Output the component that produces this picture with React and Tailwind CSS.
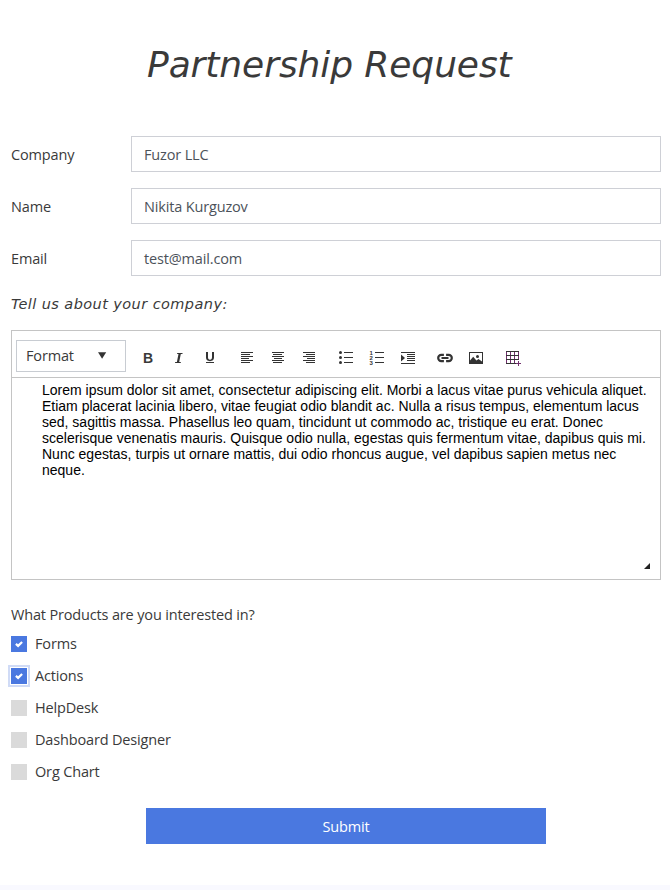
import React from "react";

const ui = "font-['Open_Sans','Noto_Sans',sans-serif] font-normal text-[14.5px] tracking-[-0.16px]";

const fields = [
  { label: "Company", value: "Fuzor LLC" },
  { label: "Name", value: "Nikita Kurguzov" },
  { label: "Email", value: "test@mail.com" },
];

const products = [
  { name: "Forms", checked: true },
  { name: "Actions", checked: true, focused: true },
  { name: "HelpDesk" },
  { name: "Dashboard Designer" },
  { name: "Org Chart" },
];

const lines = [
  "Lorem ipsum dolor sit amet, consectetur adipiscing elit. Morbi a lacus vitae purus vehicula aliquet.",
  "Etiam placerat lacinia libero, vitae feugiat odio blandit ac. Nulla a risus tempus, elementum lacus",
  "sed, sagittis massa. Phasellus leo quam, tincidunt ut commodo ac, tristique eu erat. Donec",
  "scelerisque venenatis mauris. Quisque odio nulla, egestas quis fermentum vitae, dapibus quis mi.",
  "Nunc egestas, turpis ut ornare mattis, dui odio rhoncus augue, vel dapibus sapien metus nec",
  "neque.",
];

function Icon({ width = 16, className = "", children }) {
  return (
    <svg width={width} height="16" viewBox={`0 0 ${width} 16`} fill="#333" shapeRendering="crispEdges" className={`block shrink-0 ${className}`}>
      {children}
    </svg>
  );
}

function Align({ kind, className }) {
  return (
    <Icon width={12} className={className}>
      {[12, 9, 12, 8, 12, 9].map((w, i) => (
        <rect key={i} x={kind === "left" ? 0 : kind === "right" ? 12 - w : Math.floor((12 - w) / 2)} y={2 + i * 2} width={w} height="1" />
      ))}
    </Icon>
  );
}

export default function App() {
  return (
    <div className="flex h-[890px] w-[670px] flex-col overflow-hidden bg-white text-[#3a3a3a]">
      <main className="h-[885px] pl-[11px] pr-[9px]">
        <h1 className="h-[136px] whitespace-nowrap pl-[136px] pt-[43px] font-['DejaVu_Sans',sans-serif] text-[36px] italic leading-[44px] tracking-[-0.08px] text-[#3a3a3a]">
          Partnership Request
        </h1>
        <div className="flex flex-col gap-4">
          {fields.map((f) => (
            <div key={f.label} className="flex h-9 items-center">
              <label className={`w-[120px] pt-[2px] leading-5 ${ui}`}>{f.label}</label>
              <div className={`flex h-9 flex-1 items-center border border-[#ced0d6] pl-3 pt-[2px] text-[#4c525a] ${ui}`}>
                {f.value}
              </div>
            </div>
          ))}
        </div>
        <p className="mt-[18px] h-5 whitespace-nowrap font-['DejaVu_Sans',sans-serif] text-[14.5px] italic leading-5 tracking-[0.42px]">
          Tell us about your company:
        </p>
        <section className="mt-4 flex h-[250px] flex-col border border-[#c4c4c4]">
          <div className="flex h-[47px] items-start border-b border-[#c4c4c4] pl-1 pt-[9px]">
            <button className={`flex h-8 w-[110px] items-center border border-[#c8ccd2] pb-px pl-[9px] ${ui}`}>
              <span className="w-[72px] text-left">Format</span>
              <svg width="9" height="7" viewBox="0 0 9 7" fill="#333"><path d="M0 .3h8.2L4.1 6.7z" /></svg>
            </button>
            <div className="flex h-8 items-start pt-[10px] font-['Liberation_Sans',Arial,sans-serif]">
              <span className="-mt-px ml-[17px] w-[10px] text-[14px] font-bold leading-[18px]">B</span>
              <Icon width={9} className="ml-[21px]"><path shapeRendering="auto" d="M3.3 3h5.2v1.1H6.8L5.2 12h1.6v1H1.1v-1h1.8l1.6-7.9H3z" /></Icon>
              <Icon width={10} className="ml-[22px]"><path shapeRendering="auto" d="M1 2h2v5.3c0 1.7.6 2.4 2 2.4s2-.7 2-2.4V2h2v5.6c0 2.3-1.4 3.6-4 3.6s-4-1.3-4-3.6zM1 12h8v1H1z" /></Icon>
              <Align kind="left" className="ml-[26px]" />
              <Align kind="center" className="ml-[19px]" />
              <Align kind="right" className="ml-[19px]" />
              <Icon width={15} className="ml-[24px]">
                {[3, 8, 13].map((y) => <g key={y}><circle cx="1.5" cy={y - 0.5} r="1.5" shapeRendering="auto" /><path d={`M5 ${y - 1}h9v1H5z`} /></g>)}
              </Icon>
              <Icon width={15} className="ml-[15px]">
                <path d="M6 2h9v1H6zM6 7h9v1H6zM6 12h9v1H6z" />
                {[1, 2, 3].map((n) => <text key={n} x="0.5" y={5 * n} fontSize="6" fontWeight="bold" fontFamily="Liberation Sans, sans-serif">{n}</text>)}
              </Icon>
              <Icon width={14} className="ml-[17px]">
                <path d="M0 2h14v1H0zM6 4h8v1H6zM6 6h8v1H6zM6 8h8v1H6zM6 10h8v1H6zM0 13h14v1H0z" />
                <path shapeRendering="auto" d="M0 4.5l4 3.5-4 3.5z" />
              </Icon>
              <Icon width={16} className="ml-[22px]">
                <g fill="none" stroke="#333" strokeWidth="2.2" shapeRendering="auto">
                  <path d="M6.9 4.9H4.3a3.1 3.1 0 0 0 0 6.2h2.6M9.1 4.9h2.6a3.1 3.1 0 0 1 0 6.2H9.1M4.5 8h7" />
                </g>
              </Icon>
              <Icon width={14} className="ml-[16px]">
                <path fillRule="evenodd" d="M0 2h14v12H0zM1 3v10h12V3z" />
                <path shapeRendering="auto" d="M1 10.5l3.2-3.7 3.2 3.7 2.1-1.6L13 11.5V13H1z" />
                <circle cx="8.5" cy="6.5" r="1.5" shapeRendering="auto" />
              </Icon>
              <Icon width={16} className="ml-[23px]">
                <path fill="#71306d" d="M0 1h1v13H0zM4 1h1v13H4zM8 1h1v13H8zM12 1h1v9h-1z" />
                <path d="M0 1h13v1H0zM0 5h13v1H0zM0 9h13v1H0zM0 13h10v1H0z" />
                <path fill="#71306d" d="M12 11h1v5h-1zM10 13h5v1h-5z" />
              </Icon>
            </div>
          </div>
          <div className="flex-1 pl-[30px] pt-[4px] font-['Liberation_Sans',Arial,sans-serif] text-[14px] leading-4 text-black">
            {lines.map((l) => <p key={l} className="whitespace-nowrap">{l}</p>)}
          </div>
          <svg width="6" height="6" viewBox="0 0 6 6" className="mb-[10px] mr-[10px] self-end" fill="#222"><path d="M6 0v6H0z" /></svg>
        </section>
        <p className={`mt-[25px] leading-5 ${ui}`}>What Products are you interested in?</p>
        <div className="mt-[6px] flex flex-col">
          {products.map((p) => (
            <label key={p.name} className="flex h-8 items-center pb-[6px]">
              <span className={`flex h-4 w-4 items-center justify-center ${p.checked ? "bg-[#4a78e0]" : "bg-[#dadada]"} ${p.focused ? "shadow-[0_0_0_1px_#fff,0_0_0_3px_#d0dbf6]" : ""}`}>
                {p.checked && <svg width="8" height="8" viewBox="0 0 8 8" fill="none" stroke="#fff" strokeWidth="2.2"><path d="M.9 3.9l2.2 2L7.1 2" /></svg>}
              </span>
              <span className={`ml-2 leading-5 ${ui}`}>{p.name}</span>
            </label>
          ))}
        </div>
        <button className={`ml-[135px] mt-[17px] flex h-9 w-[400px] items-center justify-center bg-[#4a78e0] pt-[2px] text-white ${ui}`}>
          Submit
        </button>
      </main>
      <footer className="h-[5px] bg-[#f9f9ff]" />
    </div>
  );
}
